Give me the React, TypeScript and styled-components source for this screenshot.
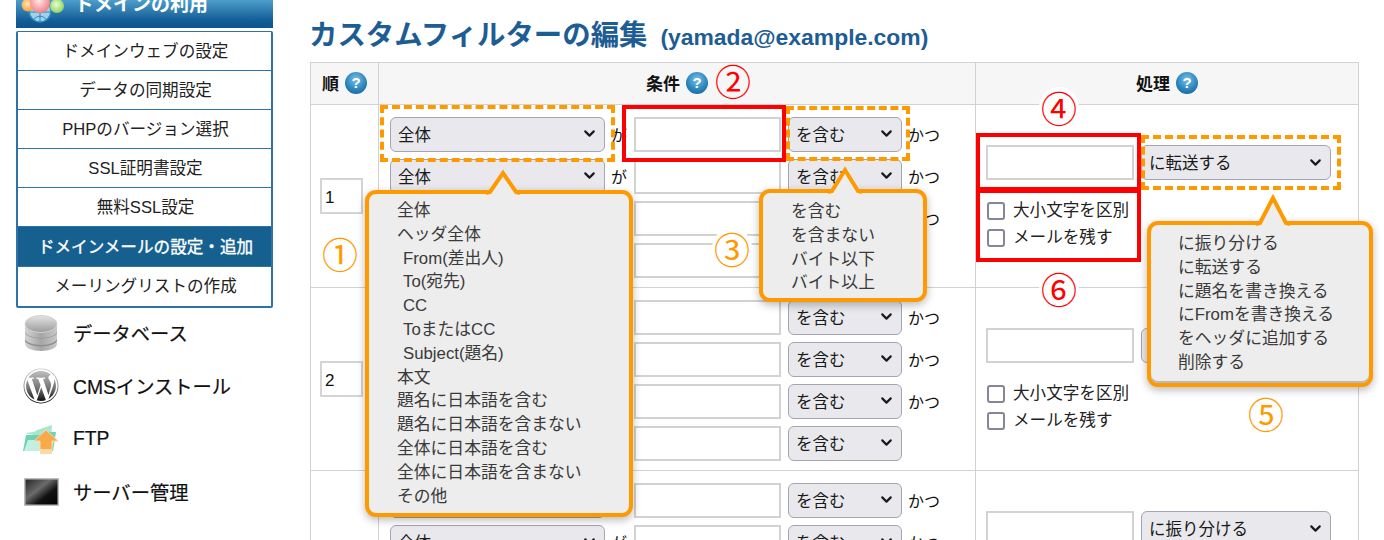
import React from 'react';
import styled, { createGlobalStyle } from 'styled-components';
import { ChevronDown } from 'lucide-react';
import { FaWordpress } from 'react-icons/fa';

const FONT = `"Liberation Sans", "Noto Sans CJK JP", sans-serif`;
const ORANGE = '#ff9900';
const RED = '#ff0000';
const LINE = '#d2d2d2';

const Global = createGlobalStyle`
  html, body { margin: 0; padding: 0; background: #fff; }
  body { font-family: ${FONT}; color: #111; }
  * { box-sizing: border-box; }
`;

const Page = styled.div`
  position: relative;
  display: flex;
  width: 1384px;
  height: 540px;
  overflow: hidden;
  background: #fff;
`;

const Sidebar = styled.aside`
  width: 257px;
  margin-left: 16px;
  flex: none;
`;

const SideHeader = styled.div`
  height: 28px;
  display: flex;
  align-items: flex-end;
  gap: 10px;
  padding: 0 0 8px 5px;
  overflow: hidden;
  color: #fff;
  font-size: 19px;
  font-weight: bold;
  line-height: 30px;
  background: linear-gradient(#4d9ecb, #125b95 75%, #0f5590);
`;

const GlobeSvg = styled.svg`
  flex: none;
  margin-bottom: -8px;
`;

const Menu = styled.ul`
  list-style: none;
  margin: 3px 0 0;
  padding: 0;
  border: solid #2f72a8;
  border-width: 1px 2px 2px;
  border-radius: 2px;
`;

const MenuItem = styled.li<{ $active?: boolean }>`
  height: 39.1px;
  padding: 0 0 2px 2px;
  display: flex;
  align-items: center;
  justify-content: center;
  font-size: 16.6px;
  color: ${p => (p.$active ? '#fff' : '#222')};
  background: ${p => (p.$active ? '#16608f' : '#fff')};
  -webkit-text-stroke: ${p => (p.$active ? '0.35px #fff' : '0')};
  border-bottom: 1.5px solid #2f72a8;
  &:last-child { border-bottom: 0; }
`;

const SideLink = styled.div`
  height: 53px;
  padding-bottom: 2px;
  display: flex;
  align-items: center;
  font-size: 19.3px;
  color: #111;
  -webkit-text-stroke: 0.2px #111;
`;

const SideIcon = styled.span`
  width: 50px;
  margin-right: 7px;
  display: flex;
  justify-content: center;
  align-items: center;
`;

const WpIcon = styled(FaWordpress)`
  width: 36px;
  height: 36px;
  fill: url(#wpGrad);
`;

const Main = styled.main`
  width: 1048px;
  margin-left: 37px;
  flex: none;
`;

const TitleBar = styled.h1`
  margin: 0 0 0 -1px;
  height: 62px;
  padding-top: 15px;
  display: flex;
  align-items: baseline;
  color: #1e5d94;
  font-size: 28.4px;
  line-height: 40px;
  font-weight: bold;
  white-space: nowrap;
`;

const TitleSub = styled.span`
  font-size: 22.9px;
  margin-left: 13px;
`;

const Table = styled.table`
  width: 1048px;
  table-layout: fixed;
  border-collapse: collapse;
  border: 1.5px solid ${LINE};
`;

const Th = styled.th`
  height: 42px;
  padding: 0 0 2px;
  background: #f6f6f6;
  border: 1.5px solid ${LINE};
  font-size: 17px;
  font-weight: bold;
  color: #111;
`;

const ThInner = styled.span`
  display: inline-flex;
  align-items: center;
  gap: 6px;
`;

const Help = styled.span`
  width: 22px;
  height: 22px;
  border-radius: 50%;
  display: inline-flex;
  align-items: center;
  justify-content: center;
  color: #fff;
  font-size: 15px;
  font-weight: bold;
  background: radial-gradient(circle at 50% 35%, #7fc1e6, #2a86bd 55%, #12578e);
`;

const Td = styled.td<{ $pad?: string }>`
  height: 183px;
  padding: ${p => p.$pad || '0 0 0 10px'};
  vertical-align: top;
  border: 1.5px solid ${LINE};
`;

const OrderTd = styled(Td)`
  vertical-align: middle;
`;

const OrderInput = styled.div`
  width: 43px;
  height: 36px;
  border: 2px solid #d4d4d4;
  padding-left: 3px;
  font-size: 17px;
  line-height: 35px;
  background: #fff;
`;

const CondRows = styled.div`
  display: flex;
  flex-direction: column;
  gap: 7px;
`;

const CondRow = styled.div`
  display: flex;
  align-items: center;
  height: 35px;
  font-size: 16px;
`;

const Select = styled.div<{ $w: number; $ml?: number }>`
  width: ${p => p.$w}px;
  height: 35px;
  margin-left: ${p => p.$ml || 0}px;
  padding: 0 6px 1px 7px;
  display: flex;
  align-items: center;
  justify-content: space-between;
  flex: none;
  font-size: 16.5px;
  color: #1a1a1a;
  background: #e9e9ed;
  border: 1.5px solid #a4a4b4;
  border-radius: 6px;
`;

const Ga = styled.span`
  width: 29px;
  padding-left: 6px;
  flex: none;
`;

const Katsu = styled.span`
  margin-left: 6px;
`;

const Field = styled.div<{ $w: number }>`
  width: ${p => p.$w}px;
  height: 35px;
  flex: none;
  background: #fff;
  border: 2px solid #d2d2d2;
`;

const ActionRow = styled.div`
  display: flex;
  gap: 7px;
`;

const Checks = styled.div`
  margin-top: 21px;
  display: flex;
  flex-direction: column;
  gap: 8px;
`;

const CheckRow = styled.label`
  display: flex;
  align-items: center;
  gap: 8px;
  height: 19px;
  font-size: 16.6px;
  color: #222;
  line-height: 16px;
`;

const Box = styled.span`
  width: 18px;
  height: 18px;
  margin-left: 1px;
  border: 2px solid #85859a;
  border-radius: 3px;
  background: #fff;
`;

const Outline = styled.div<{ $x: number; $y: number; $w: number; $h: number; $red?: boolean }>`
  position: absolute;
  left: ${p => p.$x}px;
  top: ${p => p.$y}px;
  width: ${p => p.$w}px;
  height: ${p => p.$h}px;
  border: 4px ${p => (p.$red ? `solid ${RED}` : `dashed ${ORANGE}`)};
`;

const Bubble = styled.ul<{ $x: number; $y: number; $w: number; $h: number; $pad: number; $top: number; $rule?: boolean }>`
  position: absolute;
  left: ${p => p.$x}px;
  top: ${p => p.$y}px;
  width: ${p => p.$w}px;
  height: ${p => p.$h}px;
  margin: 0;
  padding: ${p => p.$top}px 0 0 ${p => p.$pad}px;
  list-style: none;
  background: #ededed;
  border: 4px solid ${ORANGE};
  border-radius: 11px;
  box-shadow: 0 3px 9px rgba(0, 0, 0, 0.28)${p => (p.$rule ? ', inset 0 -2px 0 #b9b9b9' : '')};
  font-size: 16.8px;
  line-height: 23.8px;
  color: #3a3a3a;
  white-space: nowrap;
`;

const BubbleItem = styled.li<{ $indent?: boolean }>`
  padding-left: ${p => (p.$indent ? 6 : 0)}px;
`;

const Tail = styled.svg<{ $x: number; $y: number }>`
  position: absolute;
  left: ${p => p.$x}px;
  top: ${p => p.$y}px;
  overflow: visible;
`;

const Mark = styled.span<{ $x: number; $y: number; $red?: boolean; $bg?: boolean }>`
  position: absolute;
  left: ${p => p.$x - 20}px;
  top: ${p => p.$y - 20}px;
  width: 40px;
  height: 40px;
  display: flex;
  align-items: center;
  justify-content: center;
  font-size: 36px;
  line-height: 40px;
  font-family: "Noto Sans CJK JP", sans-serif;
  font-weight: 400;
  border-radius: 50%;
  color: ${p => (p.$red ? RED : ORANGE)};
  background: ${p => (p.$bg ? '#fff' : 'transparent')};
`;

const Defs = styled.svg`
  position: absolute;
  width: 0;
  height: 0;
`;

const Chevron = () => <ChevronDown size={17} strokeWidth={3} color="#1a1a1a" />;

const Help_ = () => <Help>?</Help>;

const TailShape = ({ cx, apex, base }: { cx: number; apex: number; base: number }) => {
  const h = base - apex;
  return (
    <Tail $x={cx - 18} $y={apex} width="36" height={h + 4} viewBox={`0 0 36 ${h + 4}`}>
      <polygon points={`4,${h + 1} 18,3 32,${h + 1} 32,${h + 4} 4,${h + 4}`} fill="#ededed" />
      <polyline points={`1,${h + 2} 5,${h + 1} 18,4 31,${h + 1} 35,${h + 2}`} fill="none" stroke={ORANGE} strokeWidth="4" strokeLinejoin="miter" />
    </Tail>
  );
};

const Globe = () => (
  <GlobeSvg width="44" height="28" viewBox="0 0 44 28">
    <defs>
      <radialGradient id="pinkB" cx="45%" cy="40%" r="60%"><stop offset="0" stopColor="#ffe7e7" /><stop offset="1" stopColor="#f27f86" /></radialGradient>
      <radialGradient id="orB" cx="45%" cy="40%" r="60%"><stop offset="0" stopColor="#ffe3b8" /><stop offset="1" stopColor="#f7a13c" /></radialGradient>
      <radialGradient id="grB" cx="45%" cy="40%" r="60%"><stop offset="0" stopColor="#e6ffd0" /><stop offset="1" stopColor="#8fd35d" /></radialGradient>
    </defs>
    <circle cx="19" cy="11" r="11" fill="#9fd2ea" stroke="#2f86b8" strokeWidth="1.5" />
    <path d="M8 12h22M19 0v22M12 20c4-5 10-5 14 0" fill="none" stroke="#2f86b8" />
    <circle cx="7" cy="5" r="6.5" fill="url(#orB)" />
    <circle cx="36" cy="6" r="7" fill="url(#grB)" />
    <circle cx="19" cy="3" r="10" fill="url(#pinkB)" />
  </GlobeSvg>
);

const DbIcon = () => (
  <svg width="34" height="36" viewBox="0 0 34 36">
    <defs>
      <linearGradient id="dbG" x1="0" x2="0" y1="0" y2="1"><stop offset="0" stopColor="#e4e4e4" /><stop offset="1" stopColor="#9b9b9b" /></linearGradient>
      <linearGradient id="dbS" x1="0" x2="1" y1="0" y2="0"><stop offset="0" stopColor="#d4d4d4" /><stop offset="0.5" stopColor="#a6a6a6" /><stop offset="1" stopColor="#c8c8c8" /></linearGradient>
    </defs>
    <path d="M1 25v4c0 4 7 7 16 7s16-3 16-7v-4z" fill="url(#dbS)" />
    <ellipse cx="17" cy="25" rx="16" ry="6.5" fill="#8d8d8d" />
    <path d="M1 17v6c0 4 7 7 16 7s16-3 16-7v-6z" fill="url(#dbS)" />
    <ellipse cx="17" cy="17" rx="16" ry="6.5" fill="#8d8d8d" />
    <path d="M1 9v7c0 4 7 7 16 7s16-3 16-7V9z" fill="url(#dbS)" />
    <ellipse cx="17" cy="9" rx="16" ry="8.5" fill="url(#dbG)" stroke="#d0d0d0" />
  </svg>
);

const FtpIcon = () => (
  <svg width="38" height="30" viewBox="0 0 38 30">
    <path d="M3 9l9-1 3-2 15-5-1 14z" fill="#a8e6cf" />
    <path d="M1 27L4 11h14l4-3h12l-3 19z" fill="#6fd3b1" />
    <path d="M2 27l4-11h26l-3 11z" fill="#c4f0e0" />
    <path d="M24 6l12 11h-6v9H18v-9h-6z" fill="#f9a84a" stroke="#fbd9a8" />
    <rect x="18" y="25" width="12" height="5" fill="#fbd9a8" />
  </svg>
);

const MonitorIcon = () => (
  <svg width="35" height="28" viewBox="0 0 35 28">
    <defs>
      <linearGradient id="monG" x1="0" y1="0" x2="1" y2="1">
        <stop offset="0" stopColor="#222" /><stop offset="0.4" stopColor="#6b6b6b" /><stop offset="0.65" stopColor="#111" /><stop offset="1" stopColor="#000" />
      </linearGradient>
    </defs>
    <rect x="0.75" y="0.75" width="33.5" height="26.5" fill="url(#monG)" stroke="#bdbdbd" strokeWidth="1.5" />
  </svg>
);

const CondRowView = ({ katsu = true }: { katsu?: boolean }) => (
  <CondRow>
    <Select $w={215}>全体<Chevron /></Select>
    <Ga>が</Ga>
    <Field $w={147} />
    <Select $w={114} $ml={7}>を含む<Chevron /></Select>
    {katsu && <Katsu>かつ</Katsu>}
  </CondRow>
);

const rows = [
  { n: '1', action: 'に転送する' },
  { n: '2', action: 'に振り分ける' },
  { n: '', action: 'に振り分ける' },
];

const condOptions = [
  ['全体'], ['ヘッダ全体'], ['From(差出人)', 1], ['To(宛先)', 1], ['CC', 1], ['ToまたはCC', 1], ['Subject(題名)', 1],
  ['本文'], ['題名に日本語を含む'], ['題名に日本語を含まない'], ['全体に日本語を含む'], ['全体に日本語を含まない'], ['その他'],
] as const;

export default function App() {
  return (
    <Page>
      <Global />
      <Defs>
        <defs>
          <linearGradient id="wpGrad" x1="0" x2="0" y1="0" y2="1">
            <stop offset="0" stopColor="#c9c9c9" />
            <stop offset="0.55" stopColor="#777" />
            <stop offset="1" stopColor="#000" />
          </linearGradient>
        </defs>
      </Defs>
      <Sidebar>
        <SideHeader><Globe />ドメインの利用</SideHeader>
        <Menu>
          <MenuItem>ドメインウェブの設定</MenuItem>
          <MenuItem>データの同期設定</MenuItem>
          <MenuItem>PHPのバージョン選択</MenuItem>
          <MenuItem>SSL証明書設定</MenuItem>
          <MenuItem>無料SSL設定</MenuItem>
          <MenuItem $active>ドメインメールの設定・追加</MenuItem>
          <MenuItem>メーリングリストの作成</MenuItem>
        </Menu>
        <SideLink><SideIcon><DbIcon /></SideIcon>データベース</SideLink>
        <SideLink><SideIcon><WpIcon /></SideIcon>CMSインストール</SideLink>
        <SideLink><SideIcon><FtpIcon /></SideIcon>FTP</SideLink>
        <SideLink><SideIcon><MonitorIcon /></SideIcon>サーバー管理</SideLink>
      </Sidebar>
      <Main>
        <TitleBar>カスタムフィルターの編集<TitleSub>(yamada@example.com)</TitleSub></TitleBar>
        <Table>
          <colgroup>
            <col width="68" />
            <col width="597" />
            <col width="383" />
          </colgroup>
          <thead>
            <tr>
              <Th><ThInner>順<Help_ /></ThInner></Th>
              <Th><ThInner>条件<Help_ /></ThInner></Th>
              <Th><ThInner>処理<Help_ /></ThInner></Th>
            </tr>
          </thead>
          <tbody>
            {rows.map((r, i) => (
              <tr key={i}>
                <OrderTd $pad="0 0 0 9px">{r.n && <OrderInput>{r.n}</OrderInput>}</OrderTd>
                <Td $pad="11.5px 0 0 11px">
                  <CondRows>
                    <CondRowView />
                    <CondRowView />
                    <CondRowView />
                    <CondRowView katsu={false} />
                  </CondRows>
                </Td>
                <Td $pad="40px 0 0 10px">
                  <ActionRow>
                    <Field $w={148} />
                    <Select $w={190}>{r.action}<Chevron /></Select>
                  </ActionRow>
                  <Checks>
                    <CheckRow><Box />大小文字を区別</CheckRow>
                    <CheckRow><Box />メールを残す</CheckRow>
                  </Checks>
                </Td>
              </tr>
            ))}
          </tbody>
        </Table>
      </Main>

      <Outline $x={380} $y={105} $w={235} $h={57} />
      <Outline $x={622} $y={105} $w={164} $h={57} $red />
      <Outline $x={786} $y={106} $w={124} $h={55} />
      <Outline $x={1141} $y={135} $w={200} $h={55} />
      <Outline $x={976} $y={133} $w={165} $h={58} $red />
      <Outline $x={976} $y={189} $w={165} $h={73} $red />

      <Bubble $x={365} $y={190} $w={268} $h={327} $pad={28} $top={5}>
        {condOptions.map(o => <BubbleItem key={o[0]} $indent={o.length > 1}>{o[0]}</BubbleItem>)}
      </Bubble>
      <TailShape cx={503} apex={169} base={191} />

      <Bubble $x={759} $y={189} $w={168} $h={113} $pad={28} $top={7}>
        <BubbleItem>を含む</BubbleItem>
        <BubbleItem>を含まない</BubbleItem>
        <BubbleItem>バイト以下</BubbleItem>
        <BubbleItem>バイト以上</BubbleItem>
      </Bubble>
      <TailShape cx={845} apex={166} base={190} />

      <Bubble $x={1147} $y={221} $w={226} $h={166} $pad={27} $top={7} $rule>
        <BubbleItem>に振り分ける</BubbleItem>
        <BubbleItem>に転送する</BubbleItem>
        <BubbleItem>に題名を書き換える</BubbleItem>
        <BubbleItem>にFromを書き換える</BubbleItem>
        <BubbleItem>をヘッダに追加する</BubbleItem>
        <BubbleItem>削除する</BubbleItem>
      </Bubble>
      <TailShape cx={1273} apex={194} base={222} />

      <Mark $x={340} $y={253}>①</Mark>
      <Mark $x={733} $y={80} $red>②</Mark>
      <Mark $x={732} $y={248} $bg>③</Mark>
      <Mark $x={1059} $y={107} $red $bg>④</Mark>
      <Mark $x={1266} $y={413}>⑤</Mark>
      <Mark $x={1059} $y={288} $red $bg>⑥</Mark>
    </Page>
  );
}
